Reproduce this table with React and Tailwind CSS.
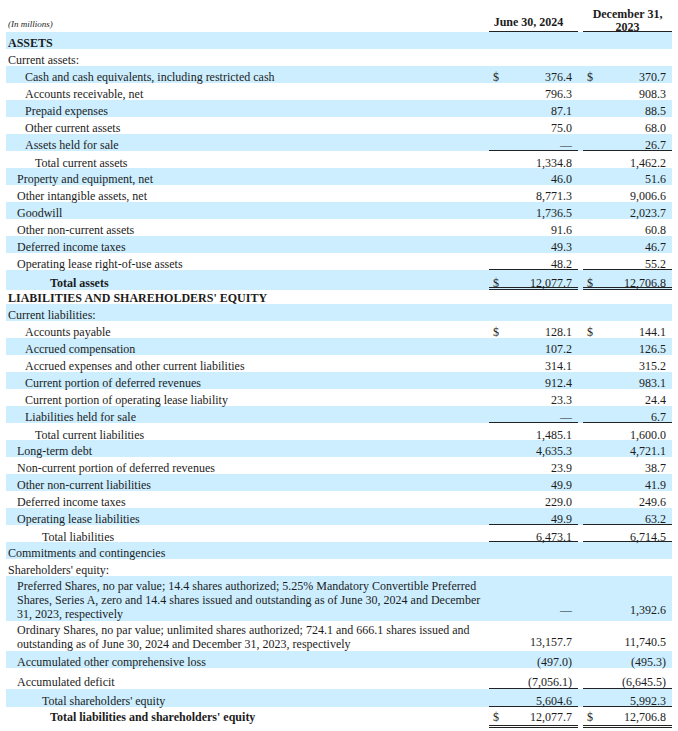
const AFTER = { pt: "pt-[5px]", h: "h-[17px]" };

const rows = [
  { label: "ASSETS", pad: 0, bold: true },
  { label: "Current assets:", pad: 0 },
  { label: "Cash and cash equivalents, including restricted cash", pad: 2, d1: true, v1: "376.4", d2: true, v2: "370.7" },
  { label: "Accounts receivable, net", pad: 2, v1: "796.3", v2: "908.3" },
  { label: "Prepaid expenses", pad: 2, v1: "87.1", v2: "88.5" },
  { label: "Other current assets", pad: 2, v1: "75.0", v2: "68.0" },
  { label: "Assets held for sale", pad: 2, v1: "—", v2: "26.7", line: "single" },
  { label: "Total current assets", pad: 3, v1: "1,334.8", v2: "1,462.2", ...AFTER },
  { label: "Property and equipment, net", pad: 1, v1: "46.0", v2: "51.6" },
  { label: "Other intangible assets, net", pad: 1, v1: "8,771.3", v2: "9,006.6" },
  { label: "Goodwill", pad: 1, v1: "1,736.5", v2: "2,023.7" },
  { label: "Other non-current assets", pad: 1, v1: "91.6", v2: "60.8" },
  { label: "Deferred income taxes", pad: 1, v1: "49.3", v2: "46.7" },
  { label: "Operating lease right-of-use assets", pad: 1, v1: "48.2", v2: "55.2", line: "single" },
  { label: "Total assets", pad: 5, bold: true, d1: true, v1: "12,077.7", d2: true, v2: "12,706.8", line: "double", pt: "pt-[6px]", h: "h-[20px]" },
  { label: "LIABILITIES AND SHAREHOLDERS' EQUITY", pad: 0, bold: true, pt: "pt-[1px]", h: "h-[14px]" },
  { label: "Current liabilities:", pad: 0 },
  { label: "Accounts payable", pad: 2, d1: true, v1: "128.1", d2: true, v2: "144.1" },
  { label: "Accrued compensation", pad: 2, v1: "107.2", v2: "126.5" },
  { label: "Accrued expenses and other current liabilities", pad: 2, v1: "314.1", v2: "315.2" },
  { label: "Current portion of deferred revenues", pad: 2, v1: "912.4", v2: "983.1" },
  { label: "Current portion of operating lease liability", pad: 2, v1: "23.3", v2: "24.4" },
  { label: "Liabilities held for sale", pad: 2, v1: "—", v2: "6.7", line: "single" },
  { label: "Total current liabilities", pad: 3, v1: "1,485.1", v2: "1,600.0", ...AFTER },
  { label: "Long-term debt", pad: 1, v1: "4,635.3", v2: "4,721.1" },
  { label: "Non-current portion of deferred revenues", pad: 1, v1: "23.9", v2: "38.7" },
  { label: "Other non-current liabilities", pad: 1, v1: "49.9", v2: "41.9" },
  { label: "Deferred income taxes", pad: 1, v1: "229.0", v2: "249.6" },
  { label: "Operating lease liabilities", pad: 1, v1: "49.9", v2: "63.2", line: "single" },
  { label: "Total liabilities", pad: 4, v1: "6,473.1", v2: "6,714.5", line: "single", ...AFTER },
  { label: "Commitments and contingencies", pad: 0 },
  { label: "Shareholders' equity:", pad: 0 },
  {
    label: "Preferred Shares, no par value; 14.4 shares authorized; 5.25% Mandatory Convertible Preferred Shares, Series A, zero and 14.4 shares issued and outstanding as of June 30, 2024 and December 31, 2023, respectively",
    pad: 1, v1: "—", v2: "1,392.6", pt: "pt-[3px]", h: "", multi: "pb-[3px]",
  },
  {
    label: "Ordinary Shares, no par value; unlimited shares authorized; 724.1 and 666.1 shares issued and outstanding as of June 30, 2024 and December 31, 2023, respectively",
    pad: 1, v1: "13,157.7", v2: "11,740.5", pt: "pt-[2px]", h: "", multi: "pb-[1px]",
  },
  { label: "Accumulated other comprehensive loss", pad: 1, v1: "(497.0)", v2: "(495.3)" },
  { label: "Accumulated deficit", pad: 1, v1: "(7,056.1)", v2: "(6,645.5)", line: "single", pt: "pt-[7px]", h: "h-[21px]" },
  { label: "Total shareholders' equity", pad: 4, v1: "5,604.6", v2: "5,992.3", line: "single", pt: "pt-[5px]", h: "h-[18px]" },
  { label: "Total liabilities and shareholders' equity", pad: 5, bold: true, d1: true, v1: "12,077.7", d2: true, v2: "12,706.8", line: "double", pt: "pt-[3px]", h: "h-[21px]" },
];

const padClass = ["pl-[2px]", "pl-[11px]", "pl-[19px]", "pl-[29px]", "pl-[36px]", "pl-[44px]"];

function Amount({ dollar, value, line, pt, multi }) {
  const border =
    line === "double"
      ? "border-b-[3px] border-double border-[#222]"
      : line === "single"
      ? "border-b border-[#222]"
      : "border-b border-transparent";
  const place = multi ? `items-end ${multi}` : `items-start ${pt}`;
  return (
    <div className={`w-[89px] flex justify-between pl-[4px] pr-[6px] leading-[14px] ${place} ${border}`}>
      <span>{dollar ? "$" : ""}</span>
      <span>{value}</span>
    </div>
  );
}

export default function App() {
  return (
    <div
      className="w-[678px] min-h-[731px] bg-white text-[#1c1c1c] text-[12px] px-[6px]"
      style={{ fontFamily: '"Liberation Serif", "Times New Roman", serif' }}
    >
      {/* column headings */}
      <div className="flex h-[32px]">
        <div className="w-[483px] flex items-end pl-[2px] pb-[2px]">
          <span className="italic text-[9px] leading-[12px]">(In millions)</span>
        </div>
        <div className="w-[89px] flex items-end justify-center border-b border-[#222] font-bold leading-[13px] pb-[2px] pr-[10px]">
          June 30, 2024
        </div>
        <div className="w-[5px]" />
        <div className="w-[89px] flex flex-col items-center border-b border-[#222] font-bold leading-[13px] pt-[8px]">
          <span>December 31,</span>
          <span>2023</span>
        </div>
      </div>
      {rows.map((r, i) => {
        const pt = r.pt || "pt-[4px]";
        const h = r.h ?? "h-[17px]";
        return (
          <div key={i} className={`flex ${h} ${i % 2 === 0 ? "bg-[#cceeff]" : "bg-white"}`}>
            <div className={`w-[483px] pr-[6px] leading-[14px] ${pt} ${padClass[r.pad]} ${r.bold ? "font-bold" : ""}`}>
              {r.label}
            </div>
            <Amount dollar={r.d1} value={r.v1} line={r.line} pt={pt} multi={r.multi} />
            <div className="w-[5px]" />
            <Amount dollar={r.d2} value={r.v2} line={r.line} pt={pt} multi={r.multi} />
          </div>
        );
      })}
    </div>
  );
}
